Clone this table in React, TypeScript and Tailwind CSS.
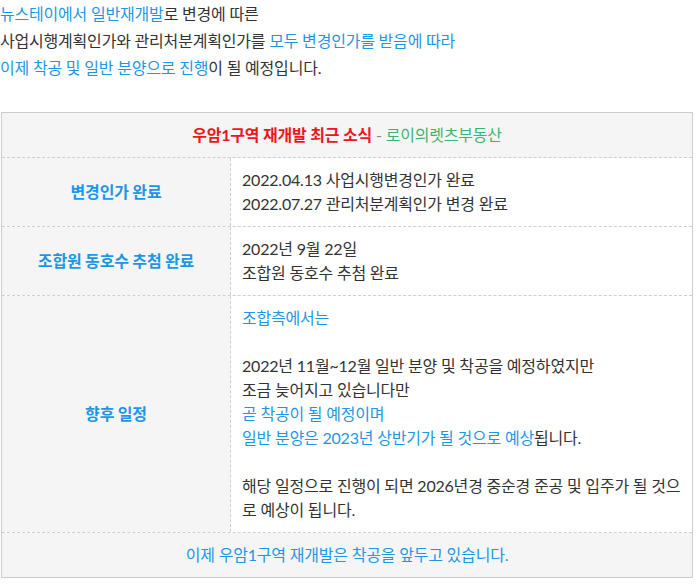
const blue = "text-[#1e96e6]";

const LeftCell = ({ children }: { children: React.ReactNode }) => (
  <div className="flex items-center justify-center border-r border-dashed border-[#cfcfcf] bg-[#f5f5f5] font-bold text-[#1e96e6]">
    {children}
  </div>
);

const App = () => {
  return (
    <div
      className="w-[696px] bg-white text-[16px] tracking-[-0.2px] text-[#333]"
      style={{ fontFamily: 'Lato, "Noto Sans CJK KR", sans-serif' }}
    >
      {/* Intro */}
      <div className="leading-[27px]">
        <p>
          <span className={blue}>뉴스테이에서 일반재개발</span>로 변경에 따른
        </p>
        <p>
          사업시행계획인가와 관리처분계획인가를{" "}
          <span className={blue}>모두 변경인가를 받음에 따라</span>
        </p>
        <p>
          <span className={blue}>이제 착공 및 일반 분양으로 진행</span>이 될 예정입니다.
        </p>
      </div>

      {/* Table */}
      <div className="ml-px mt-[31px] w-[692px] border border-[#cccccc]">
        <div className="flex h-[45px] items-center justify-center border-b border-dashed border-[#cfcfcf] bg-[#f5f5f5]">
          <span className="font-bold text-[#ee1520]">우암1구역 재개발 최근 소식</span>
          <span className="whitespace-pre text-[#888]"> - </span>
          <span className="text-[#3cb46e]">로이의렛츠부동산</span>
        </div>

        <div className="grid grid-cols-[229px_1fr] border-b border-dashed border-[#cfcfcf]">
          <LeftCell>변경인가 완료</LeftCell>
          <div className="px-[11px] py-[10px] leading-[24px]">
            <p>2022.04.13 사업시행변경인가 완료</p>
            <p>2022.07.27 관리처분계획인가 변경 완료</p>
          </div>
        </div>

        <div className="grid grid-cols-[229px_1fr] border-b border-dashed border-[#cfcfcf]">
          <LeftCell>조합원 동호수 추첨 완료</LeftCell>
          <div className="px-[11px] py-[10px] leading-[24px]">
            <p>2022년 9월 22일</p>
            <p>조합원 동호수 추첨 완료</p>
          </div>
        </div>

        <div className="grid grid-cols-[229px_1fr] border-b border-dashed border-[#cfcfcf]">
          <LeftCell>향후 일정</LeftCell>
          <div className="px-[11px] pb-[10px] pt-[10px] leading-[24px]">
            <p className={blue}>조합측에서는</p>
            <p>&nbsp;</p>
            <p>2022년 11월~12월 일반 분양 및 착공을 예정하였지만</p>
            <p>조금 늦어지고 있습니다만</p>
            <p className={blue}>곧 착공이 될 예정이며</p>
            <p>
              <span className={blue}>일반 분양은 2023년 상반기가 될 것으로 예상</span>됩니다.
            </p>
            <p>&nbsp;</p>
            <p>해당 일정으로 진행이 되면 2026년경 중순경 준공 및 입주가 될 것으로 예상이 됩니다.</p>
          </div>
        </div>

        <div className="flex h-[44px] items-center justify-center bg-[#f5f5f5] text-[#1e96e6]">
          이제 우암1구역 재개발은 착공을 앞두고 있습니다.
        </div>
      </div>
    </div>
  );
};

export default App;
